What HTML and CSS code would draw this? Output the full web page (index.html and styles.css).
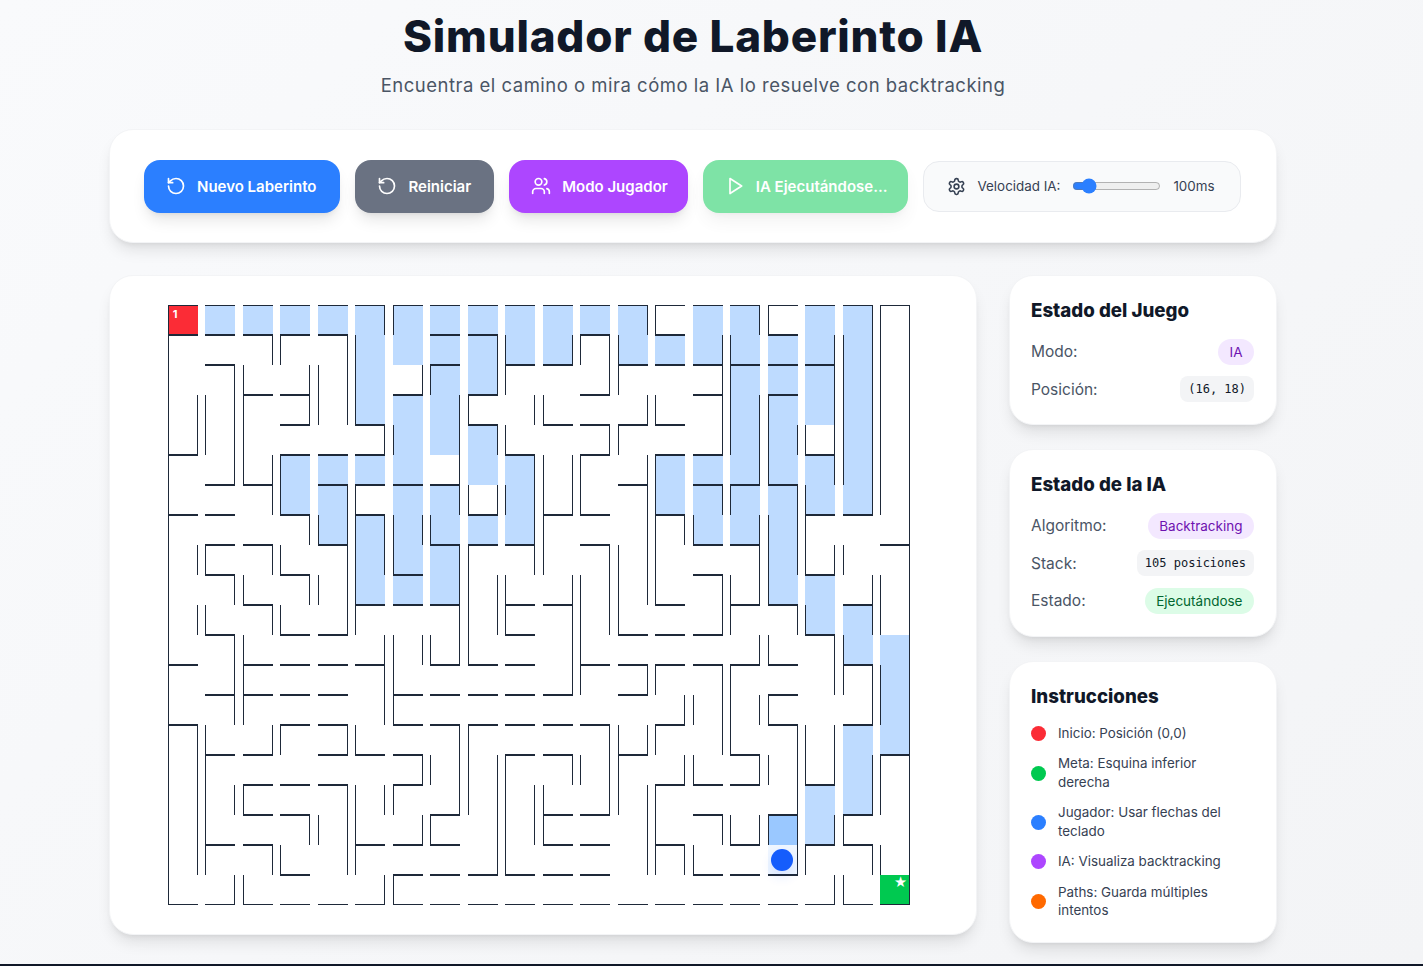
FILE: index.html
```html
<!DOCTYPE html>
<html lang="es">
<head>
  <meta charset="UTF-8">
  <meta name="viewport" content="width=device-width, initial-scale=1.0">
  <title>Simulador de Laberinto IA</title>
  <link rel="stylesheet" href="styles.css">
</head>
<body>
  <div class="page">
    <header class="header">
      <h1>Simulador de Laberinto IA</h1>
      <p>Encuentra el camino o mira cómo la IA lo resuelve con backtracking</p>
    </header>

    <section class="controls">
      <button class="btn btn-blue">
        <svg class="icon" viewBox="0 0 24 24"><path d="M3 12a9 9 0 1 0 9-9 9.75 9.75 0 0 0-6.74 2.74L3 8"/><path d="M3 3v5h5"/></svg>
        Nuevo Laberinto
      </button>
      <button class="btn btn-gray">
        <svg class="icon" viewBox="0 0 24 24"><path d="M3 12a9 9 0 1 0 9-9 9.75 9.75 0 0 0-6.74 2.74L3 8"/><path d="M3 3v5h5"/></svg>
        Reiniciar
      </button>
      <button class="btn btn-purple">
        <svg class="icon" viewBox="0 0 24 24"><path d="M16 21v-2a4 4 0 0 0-4-4H6a4 4 0 0 0-4 4v2"/><circle cx="9" cy="7" r="4"/><path d="M22 21v-2a4 4 0 0 0-3-3.87"/><path d="M16 3.13a4 4 0 0 1 0 7.75"/></svg>
        Modo Jugador
      </button>
      <button class="btn btn-green">
        <svg class="icon" viewBox="0 0 24 24"><polygon points="6 3 20 12 6 21 6 3"/></svg>
        IA Ejecutándose...
      </button>
      <div class="speed">
        <svg class="icon icon-gear" viewBox="0 0 24 24"><path d="M12.22 2h-.44a2 2 0 0 0-2 2v.18a2 2 0 0 1-1 1.73l-.43.25a2 2 0 0 1-2 0l-.15-.08a2 2 0 0 0-2.73.73l-.22.38a2 2 0 0 0 .73 2.73l.15.1a2 2 0 0 1 1 1.72v.51a2 2 0 0 1-1 1.74l-.15.09a2 2 0 0 0-.73 2.73l.22.38a2 2 0 0 0 2.73.73l.15-.08a2 2 0 0 1 2 0l.43.25a2 2 0 0 1 1 1.73V20a2 2 0 0 0 2 2h.44a2 2 0 0 0 2-2v-.18a2 2 0 0 1 1-1.73l.43-.25a2 2 0 0 1 2 0l.15.08a2 2 0 0 0 2.73-.73l.22-.39a2 2 0 0 0-.73-2.73l-.15-.08a2 2 0 0 1-1-1.74v-.5a2 2 0 0 1 1-1.74l.15-.09a2 2 0 0 0 .73-2.73l-.22-.38a2 2 0 0 0-2.73-.73l-.15.08a2 2 0 0 1-2 0l-.43-.25a2 2 0 0 1-1-1.73V4a2 2 0 0 0-2-2z"/><circle cx="12" cy="12" r="3"/></svg>
        <label for="speedRange">Velocidad IA:</label>
        <input id="speedRange" class="speed-range" type="range" min="50" max="500" step="10" value="100">
        <span>100ms</span>
      </div>
    </section>

    <main class="layout">
      <section class="board">
        <div id="maze" class="maze"></div>
      </section>

      <aside class="sidebar">
        <div class="card">
          <h3>Estado del Juego</h3>
          <div class="row"><span>Modo:</span><span class="pill pill-purple">IA</span></div>
          <div class="row"><span>Posición:</span><code class="code">(16, 18)</code></div>
        </div>

        <div class="card">
          <h3>Estado de la IA</h3>
          <div class="row"><span>Algoritmo:</span><span class="pill pill-purple">Backtracking</span></div>
          <div class="row"><span>Stack:</span><code class="code">105 posiciones</code></div>
          <div class="row"><span>Estado:</span><span class="pill pill-green">Ejecutándose</span></div>
        </div>

        <div class="card">
          <h3>Instrucciones</h3>
          <ul class="legend">
            <li><i class="dot dot-red"></i><span>Inicio: Posición (0,0)</span></li>
            <li><i class="dot dot-green"></i><span>Meta: Esquina inferior derecha</span></li>
            <li><i class="dot dot-blue"></i><span>Jugador: Usar flechas del teclado</span></li>
            <li><i class="dot dot-purple"></i><span>IA: Visualiza backtracking</span></li>
            <li><i class="dot dot-orange"></i><span>Paths: Guarda múltiples intentos</span></li>
          </ul>
        </div>
      </aside>
    </main>
  </div>

  <script src="maze.js"></script>
</body>
</html>
```

FILE: styles.css
```css
* {
  box-sizing: border-box;
}
body {
  margin: 0;
  font-family: Inter, "Open Sans", sans-serif;
  color: #364153;
  background: linear-gradient(135deg, #f9fafc, #f3f4f6);
}
.page {
  height: 966px;
  padding: 0 146px 0 109px;
  border-bottom: 2px solid #101828;
  overflow: hidden;
}
.header {
  text-align: center;
  padding-top: 10px;
  margin-bottom: 30px;
}
.header h1 {
  margin: 0;
  font-size: 44px;
  line-height: 52px;
  font-weight: 800;
  letter-spacing: 0.8px;
  color: #101828;
}
.header p {
  margin: 9px 0 0;
  font-size: 18.5px;
  line-height: 28px;
  letter-spacing: 0.5px;
  color: #4a5565;
}
.controls {
  display: flex;
  align-items: center;
  gap: 15px;
  height: 114px;
  padding: 0 34px;
  background: #fff;
  border: 1px solid #f3f4f6;
  border-radius: 24px;
  box-shadow: 0 10px 15px -3px rgba(0, 0, 0, 0.1), 0 4px 6px -4px rgba(0, 0, 0, 0.1);
  margin-bottom: 32px;
}
.btn {
  display: flex;
  flex: none;
  align-items: center;
  gap: 11px;
  height: 53px;
  padding: 0 22px;
  border: none;
  border-radius: 16px;
  font-family: inherit;
  font-size: 15px;
  font-weight: 600;
  white-space: nowrap;
  color: #fff;
  box-shadow: 0 10px 15px -3px rgba(0, 0, 0, 0.1), 0 4px 6px -4px rgba(0, 0, 0, 0.1);
  cursor: pointer;
}
.btn-blue {
  padding-right: 24px;
  background: #2b7fff;
}
.btn-gray {
  padding-right: 23px;
  background: #6a7282;
}
.btn-purple {
  padding-right: 20px;
  background: #ad46ff;
}
.btn-green {
  padding-right: 20px;
  background: #00c950;
  opacity: 0.5;
}
.icon {
  width: 20px;
  height: 20px;
  flex: none;
  fill: none;
  stroke: currentColor;
  stroke-width: 2;
  stroke-linecap: round;
  stroke-linejoin: round;
}
.speed {
  display: flex;
  flex: none;
  align-items: center;
  gap: 12px;
  height: 51px;
  padding: 0 25px 0 23px;
  background: #f9fafb;
  border: 1px solid #e9ebef;
  border-radius: 16px;
  font-size: 13.4px;
  white-space: nowrap;
  color: #364153;
}
.icon-gear {
  width: 19px;
  height: 19px;
}
.speed-range {
  width: 89px;
  margin: 0;
  accent-color: #2b7fff;
}
.layout {
  display: flex;
  gap: 32px;
  align-items: flex-start;
}
.board {
  flex: none;
  width: 868px;
  height: 660px;
  padding: 29px 0 0 57.75px;
  background: #fff;
  border: 1px solid #f3f4f6;
  border-radius: 24px;
  box-shadow: 0 10px 15px -3px rgba(0, 0, 0, 0.1), 0 4px 6px -4px rgba(0, 0, 0, 0.1);
}
.maze {
  display: grid;
  grid-template-columns: repeat(20, 30px);
  grid-auto-rows: 30px;
  column-gap: 7.5px;
}
.cell {
  display: flex;
  align-items: center;
  justify-content: center;
  border: 0 solid #1e2939;
}
.wall-top {
  border-top-width: 1px;
}
.wall-right {
  border-right-width: 1px;
}
.wall-bottom {
  border-bottom-width: 1px;
}
.wall-left {
  border-left-width: 1px;
}
.visited {
  background: #bedbff;
}
.current {
  background: #9ac8ff;
}
.player-cell {
  background: #eff6ff;
}
.player {
  width: 22px;
  height: 22px;
  border-radius: 50%;
  background: #155dfc;
  box-shadow: 0 6px 12px rgba(21, 93, 252, 0.12);
}
.start {
  align-items: flex-start;
  justify-content: flex-start;
  padding: 2px 0 0 4px;
  background: #fb2c36;
  color: #fff;
  font-size: 11px;
  line-height: 12px;
  font-weight: 700;
}
.goal {
  align-items: flex-start;
  justify-content: flex-end;
  padding: 0 2px 0 0;
  background: #00c950;
  color: #fff;
  font-size: 13px;
  line-height: 14px;
}
.sidebar {
  flex: none;
  width: 268px;
  display: flex;
  flex-direction: column;
  gap: 24px;
}
.card {
  padding: 23px 22px 22px 21px;
  background: #fff;
  border: 1px solid #f3f4f6;
  border-radius: 24px;
  box-shadow: 0 10px 15px -3px rgba(0, 0, 0, 0.1), 0 4px 6px -4px rgba(0, 0, 0, 0.1);
}
.card h3 {
  margin: 0 0 15.5px;
  font-size: 18.7px;
  line-height: 24px;
  font-weight: 800;
  color: #101828;
}
.row {
  display: flex;
  align-items: center;
  justify-content: space-between;
  height: 26px;
  margin-top: 11.5px;
  font-size: 15.5px;
  color: #4a5565;
}
.card h3 + .row {
  margin-top: 0;
}
.pill {
  padding: 0 11.5px;
  border-radius: 13px;
  font-size: 13.5px;
  line-height: 26px;
}
.pill-purple {
  background: #f3e8ff;
  color: #6e11b0;
}
.pill-green {
  background: #dcfce7;
  color: #016630;
}
.code {
  padding: 0 8px;
  border-radius: 8px;
  background: #f3f4f6;
  color: #101828;
  font-family: "DejaVu Sans Mono", "Liberation Mono", monospace;
  font-size: 12px;
  line-height: 26px;
}
.legend {
  list-style: none;
  margin: 1px 0 0;
  padding: 0;
  display: flex;
  flex-direction: column;
  gap: 11.5px;
  font-size: 13.4px;
  line-height: 18.75px;
  color: #364153;
}
.legend li {
  display: flex;
  align-items: center;
  gap: 12px;
}
.legend span {
  padding-right: 24px;
}
.dot {
  width: 15px;
  height: 15px;
  border-radius: 50%;
  flex: none;
}
.dot-red {
  background: #fb2c36;
}
.dot-green {
  background: #00c950;
}
.dot-blue {
  background: #2b7fff;
}
.dot-purple {
  background: #ad46ff;
}
.dot-orange {
  background: #ff6900;
}
```

FILE: maze.js
```js
const SIZE = 20;

// hWalls[r]: columns with a wall between row r-1 and row r
const hWalls = {
  1: [0, 1, 2, 3, 4, 7, 8, 11, 13, 16],
  2: [1, 7, 9, 10, 12, 13, 14, 15, 16, 17],
  3: [2, 3, 6, 8, 11, 14, 16],
  4: [3, 5, 8, 10, 11, 12, 13],
  5: [0, 3, 4, 5, 9, 11, 13, 14, 17],
  6: [1, 2, 4, 5, 6, 7, 12, 14, 15, 16],
  7: [0, 1, 3, 5, 8, 10, 11, 13, 17, 18],
  8: [1, 2, 4, 7, 8, 9, 11, 14, 15, 19],
  9: [1, 3, 6, 14, 17],
  10: [2, 5, 6, 7, 9, 10, 13, 15, 16, 18],
  11: [1, 3, 4, 9, 12, 13, 14, 17],
  12: [0, 2, 3, 4, 5, 7, 8, 9, 11, 12, 13, 14, 15, 16, 18],
  13: [1, 2, 3, 4, 6, 7, 8, 9, 10, 12, 16],
  14: [0, 3, 4, 6, 7, 8, 9, 10, 11, 13, 16, 18],
  15: [1, 2, 4, 5, 6, 9, 10, 12, 15, 19],
  16: [2, 3, 4, 6, 13, 14, 15, 17],
  17: [2, 3, 7, 10, 11, 14, 16, 18],
  18: [1, 2, 5, 6, 7, 10, 11, 13, 15, 17, 18],
  19: [3, 6, 7, 8, 9, 10, 11, 14, 15, 16]
};

// vWalls[c]: rows with a wall between column c and column c+1
const vWalls = {
  0: [3, 4, 8, 10, 14, 15, 16, 17, 18],
  1: [2, 3, 4, 5, 9, 11, 12, 13, 16, 19],
  2: [1, 5, 6, 8, 10, 14, 18],
  3: [2, 3, 7, 9, 17],
  4: [1, 2, 3, 6, 7, 8, 9, 10, 14, 16, 17, 18],
  5: [0, 4, 7, 8, 11, 12, 13, 16, 19],
  6: [2, 7, 11, 15, 17],
  7: [3, 4, 5, 6, 8, 9, 10, 11, 14, 15, 16],
  8: [1, 2, 4, 6, 9, 10, 15, 16, 17, 18],
  9: [3, 5, 6, 7, 8, 16, 17],
  10: [1, 5, 6, 9, 10, 11, 12, 15],
  11: [1, 2, 4, 8, 9, 10, 14, 15, 16],
  12: [0, 3, 5, 6, 7, 8, 9, 12, 14, 16, 17, 18],
  13: [7, 13, 15, 18],
  14: [1, 2, 3, 4, 6, 9, 10, 12, 13, 14, 17],
  15: [0, 3, 4, 5, 7, 8, 9, 11, 13, 15, 17],
  16: [4, 6, 7, 8, 10, 14, 15, 16, 17, 18],
  17: [1, 2, 3, 4, 5, 8, 11, 12, 14, 15, 17, 19],
  18: [0, 1, 2, 3, 4, 5, 6, 9, 10, 12, 13, 15, 16, 18]
};

// cells drawn without their left line, "col,row"
const noLeft = ["8,4", "8,5", "17,16", "17,17", "18,14", "18,15"];

// visited[r]: columns of the trail in row r
const visited = {
  0: [1, 2, 3, 4, 5, 6, 7, 8, 9, 10, 11, 12, 14, 15, 17, 18],
  1: [5, 6, 7, 8, 9, 10, 12, 13, 14, 15, 16, 17, 18],
  2: [5, 7, 8, 15, 16, 17, 18],
  3: [5, 6, 7, 15, 16, 17, 18],
  4: [6, 7, 8, 15, 16, 18],
  5: [3, 4, 5, 6, 8, 9, 13, 14, 15, 16, 17, 18],
  6: [3, 4, 6, 7, 9, 13, 14, 15, 16, 17, 18],
  7: [4, 5, 6, 7, 8, 9, 14, 15, 16],
  8: [5, 6, 7, 16],
  9: [5, 6, 7, 16, 17],
  10: [17, 18],
  11: [18, 19],
  12: [19],
  13: [19],
  14: [18, 19],
  15: [18],
  16: [17, 18],
  17: [17]
};

const maze = document.getElementById("maze");

for (let r = 0; r < SIZE; r++) {
  for (let c = 0; c < SIZE; c++) {
    const cell = document.createElement("div");
    cell.className = "cell";

    if (r === 0 || hWalls[r].includes(c)) cell.classList.add("wall-top");
    if (r === SIZE - 1 || hWalls[r + 1].includes(c)) cell.classList.add("wall-bottom");
    if (c === SIZE - 1 || vWalls[c].includes(r)) cell.classList.add("wall-right");
    if (c === 0 || (vWalls[c - 1].includes(r) && !noLeft.includes(c + "," + r))) {
      cell.classList.add("wall-left");
    }

    if (visited[r] && visited[r].includes(c)) cell.classList.add("visited");

    if (r === 0 && c === 0) {
      cell.classList.add("start");
      cell.textContent = "1";
    }
    if (r === 17 && c === 16) cell.classList.add("current");
    if (r === 18 && c === 16) {
      cell.classList.add("player-cell");
      const player = document.createElement("div");
      player.className = "player";
      cell.appendChild(player);
    }
    if (r === SIZE - 1 && c === SIZE - 1) {
      cell.classList.add("goal");
      cell.textContent = "★";
    }

    maze.appendChild(cell);
  }
}
```
